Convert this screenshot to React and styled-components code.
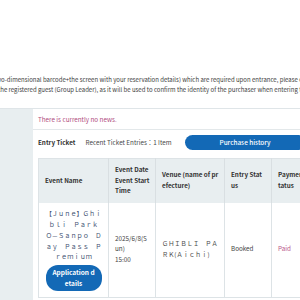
import React from "react";
import styled, { createGlobalStyle } from "styled-components";

const Global = createGlobalStyle`
  html, body { margin: 0; padding: 0; background: #fff; overflow: hidden; }
  body {
    font-family: "Noto Sans CJK JP", "Noto Sans", sans-serif;
    color: #3a3a3a;
    width: 300px;
  }
  * { box-sizing: border-box; }
`;

const Page = styled.div`
  width: 300px;
  height: 300px;
  overflow: hidden;
`;

const Intro = styled.div`
  margin-top: 75px;
  margin-bottom: 13px;
  font-size: 6px;
  line-height: 10px;
  color: #3c3c3c;
  white-space: nowrap;
`;

const IntroLine = styled.div`
  margin-left: ${(p) => p.$shift}px;
`;

const Main = styled.div`
  display: flex;
  border-top: 1px solid #dfe5e8;
  width: 360px;
  min-height: 200px;
`;

const Sidebar = styled.aside`
  width: 33px;
  flex: none;
  background: #e8eef0;
`;

const Content = styled.div`
  flex: 1;
  display: flex;
  flex-direction: column;
`;

const NewsRow = styled.div`
  height: 21px;
  display: flex;
  align-items: center;
  padding-left: 5px;
  font-size: 6.3px;
  color: #b24f7f;
  border-bottom: 1px solid #e3e8ea;
`;

const EntrySection = styled.section`
  padding: 5px 0 0 5px;
`;

const Toolbar = styled.div`
  display: flex;
  align-items: center;
  height: 15px;
  font-size: 6.3px;
  margin-bottom: 8px;
`;

const ToolTitle = styled.span`
  font-weight: 700;
  color: #333;
  margin-right: 10px;
`;

const ToolCount = styled.span`
  color: #4a4a4a;
  margin-right: 13px;
`;

const PurchaseButton = styled.button`
  width: 121px;
  height: 15px;
  border: none;
  border-radius: 8px;
  background: #1369b6;
  color: #fff;
  font-family: inherit;
  font-size: 6.4px;
  font-weight: 500;
  padding: 0;
`;

const Table = styled.table`
  border-collapse: collapse;
  table-layout: fixed;
  font-size: 6.3px;
  line-height: 10.6px;
  border: 1px solid #dde3e6;
`;

const Th = styled.th`
  width: ${(p) => p.$w}px;
  background: #e8eef0;
  font-weight: 700;
  color: #333;
  text-align: left;
  vertical-align: middle;
  padding: 6px 5.25px 6px 6px;
  height: 44px;
  word-break: break-all;
  border-right: 1px solid #d9dfe2;
`;

const Td = styled.td`
  vertical-align: middle;
  padding: 6px;
  word-break: break-all;
  border-right: 1px solid #dde3e6;
  color: ${(p) => p.$color || "#444"};
  text-align: ${(p) => p.$align || "left"};
`;

const WideText = styled.div`
  color: ${(p) => p.$color};
  font-size: 6.2px;
  line-height: 10.9px;
`;

const DetailButton = styled.button`
  display: block;
  margin: 2px auto 0;
  width: 56px;
  border: none;
  border-radius: 12px;
  background: #1369b6;
  color: #fff;
  font-family: inherit;
  font-size: 6.5px;
  font-weight: 700;
  line-height: 10.7px;
  padding: 2px 5px;
  word-break: break-all;
`;

export default function App() {
  return (
    <Page>
      <Global />
      <Intro>
        <IntroLine $shift={-6}>
          two-dimensional barcode+the screen with your reservation details) which are required upon entrance, please check
        </IntroLine>
        <IntroLine $shift={-2}>
          the registered guest (Group Leader), as it will be used to confirm the identity of the purchaser when entering the park.
        </IntroLine>
      </Intro>
      <Main>
        <Sidebar />
        <Content>
          <NewsRow>There is currently no news.</NewsRow>
          <EntrySection>
            <Toolbar>
              <ToolTitle>Entry Ticket</ToolTitle>
              <ToolCount>Recent Ticket Entries：1 Item</ToolCount>
              <PurchaseButton>Purchase history</PurchaseButton>
            </Toolbar>
            <Table>
              <thead>
                <tr>
                  <Th $w={70}>Event Name</Th>
                  <Th $w={47}>Event Date Event Start Time</Th>
                  <Th $w={69}>Venue (name of prefecture)</Th>
                  <Th $w={47}>Entry Status</Th>
                  <Th $w={47}>Payment Status</Th>
                </tr>
              </thead>
              <tbody>
                <tr>
                  <Td $align="center">
                    <WideText $color="#3d4f70">
                      【Ｊｕｎｅ】Ｇｈｉｂｌｉ　Ｐａｒｋ　Ｏ－Ｓａｎｐｏ　Ｄａｙ　Ｐａｓｓ　Ｐｒｅｍｉｕｍ
                    </WideText>
                    <DetailButton>Application details</DetailButton>
                  </Td>
                  <Td>
                    2025/6/8(Sun)
                    <br />
                    15:00
                  </Td>
                  <Td>
                    <WideText $color="#4a4a4a">ＧＨＩＢＬＩ　ＰＡＲＫ(Ａｉｃｈｉ)</WideText>
                  </Td>
                  <Td>Booked</Td>
                  <Td $color="#b9568a">Paid</Td>
                </tr>
              </tbody>
            </Table>
          </EntrySection>
        </Content>
      </Main>
    </Page>
  );
}
